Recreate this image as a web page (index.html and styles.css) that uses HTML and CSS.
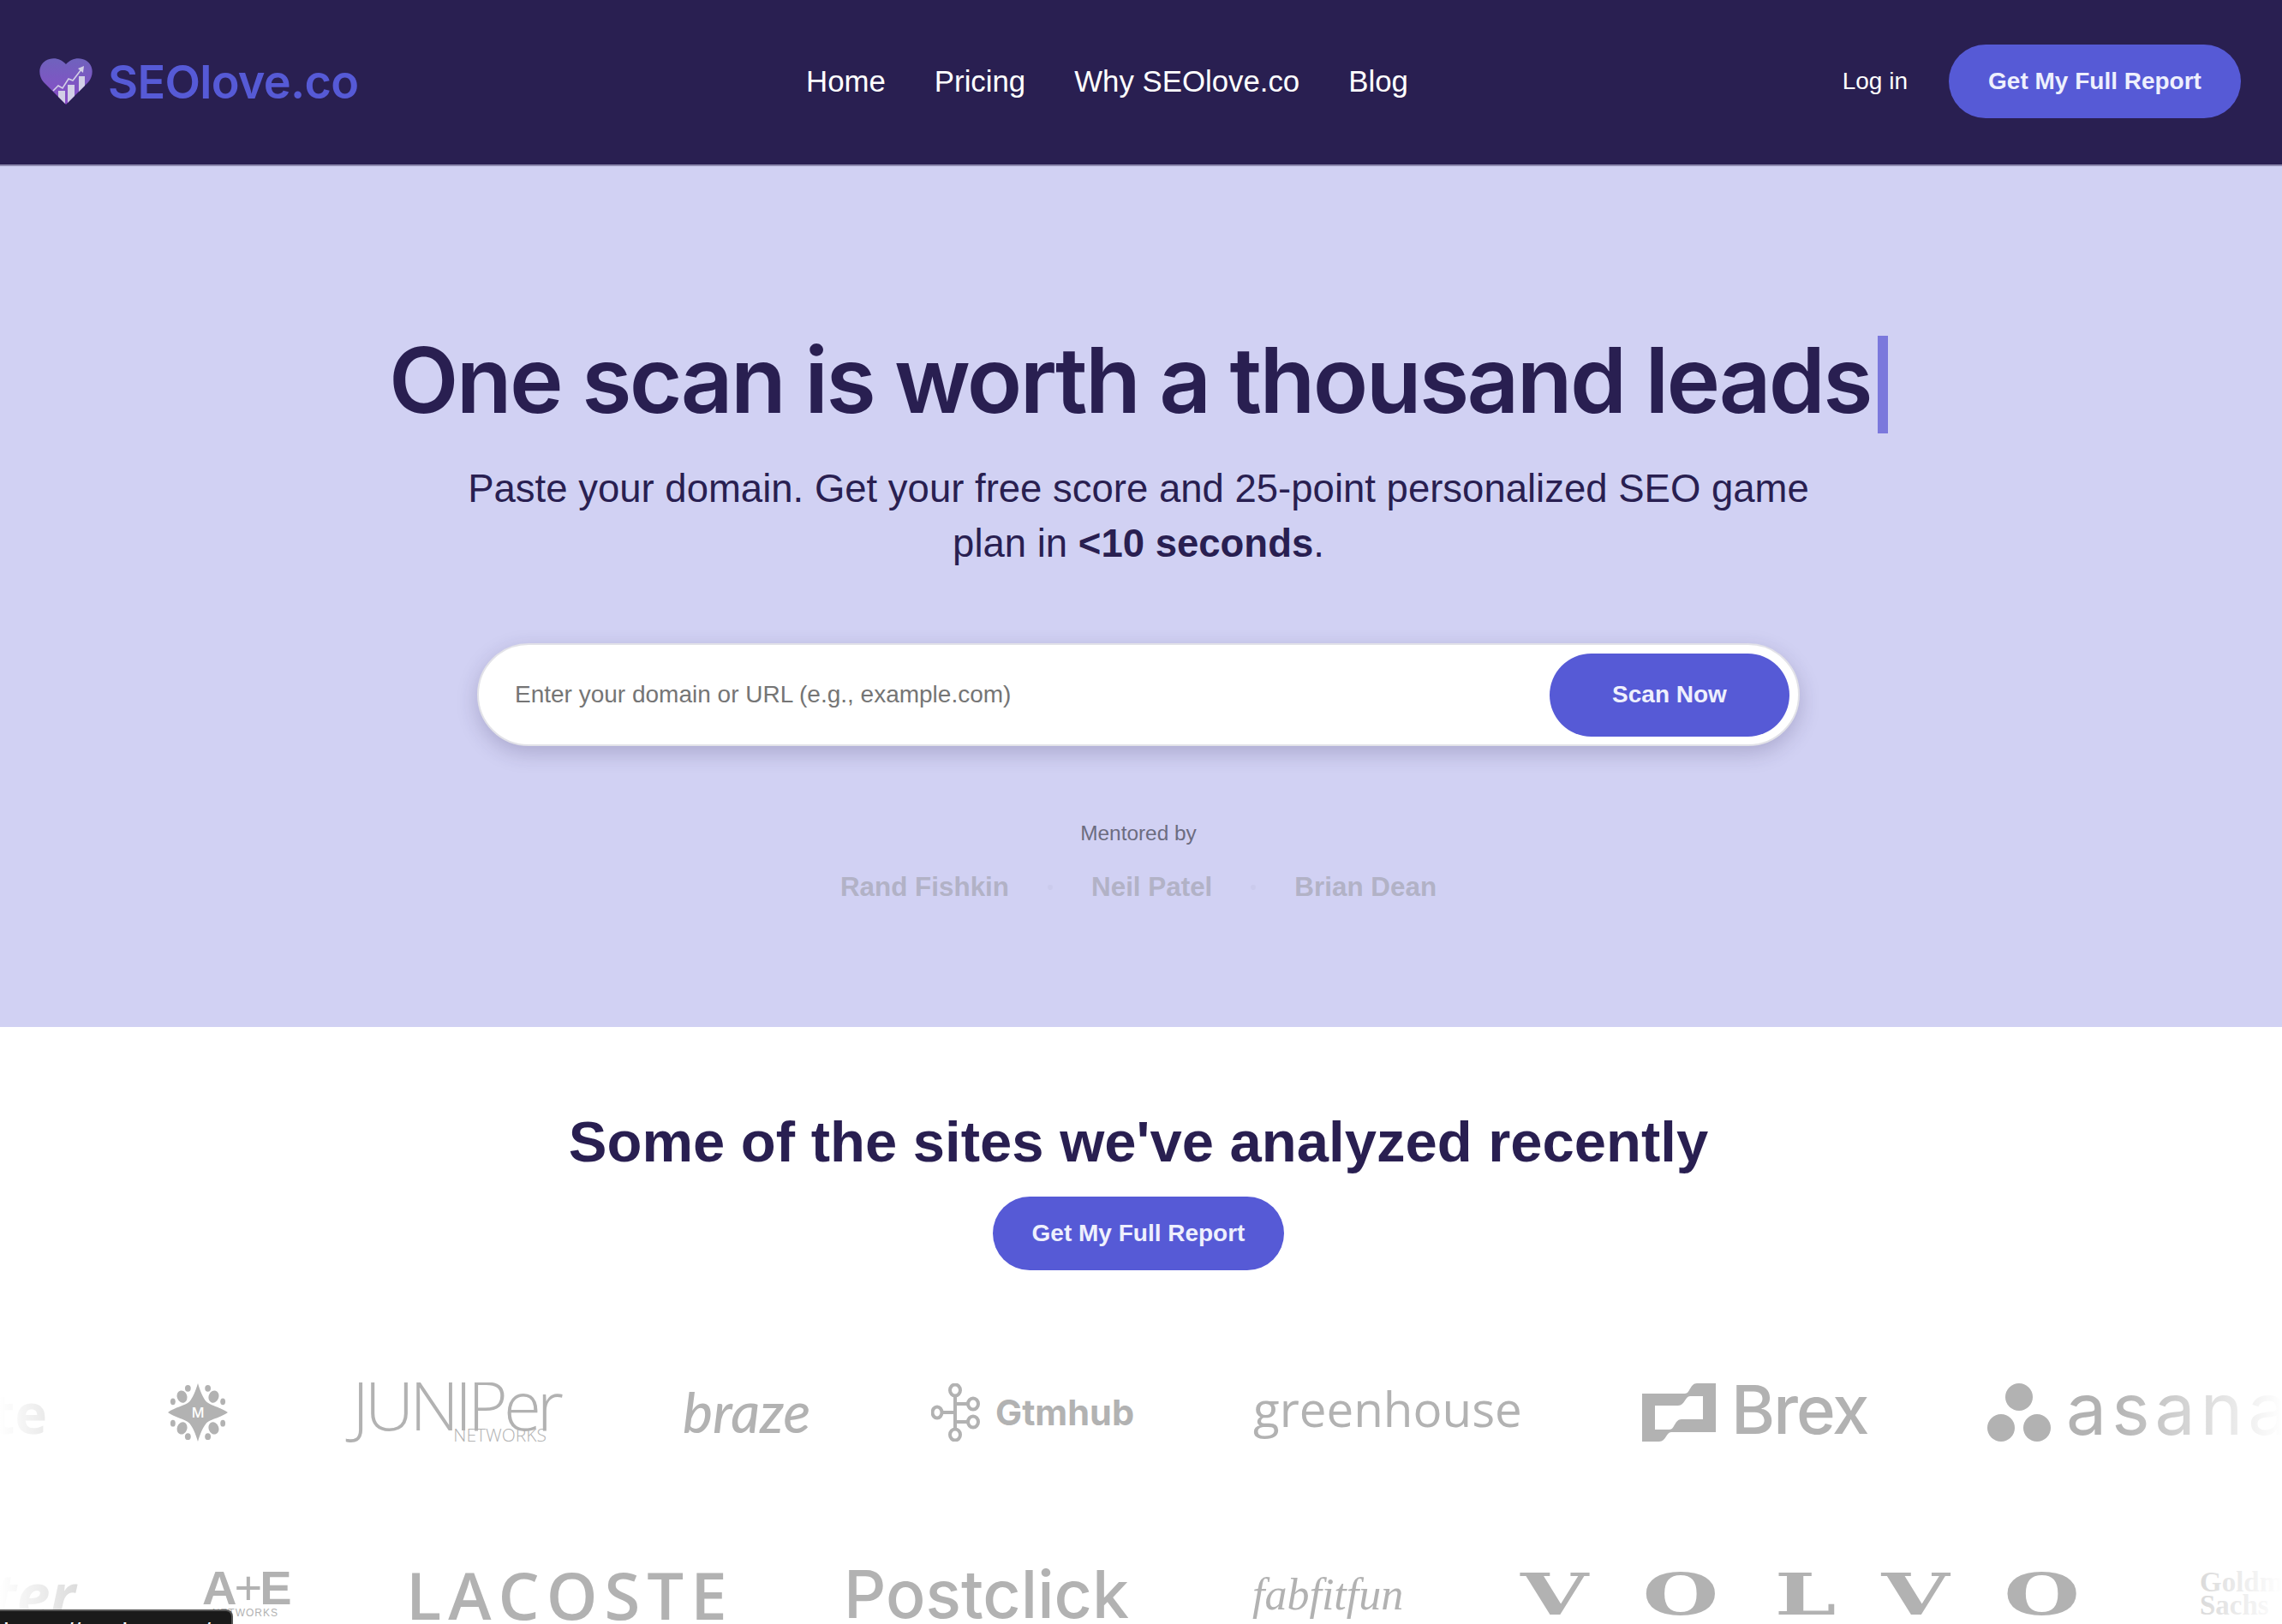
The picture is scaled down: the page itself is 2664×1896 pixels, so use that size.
FILE: index.html
```html
<!DOCTYPE html>
<html lang="en">
<head>
    <meta charset="UTF-8">
    <title>SEOlove.co</title>
    <meta name="viewport" content="width=device-width, initial-scale=1">
    <link rel="stylesheet" href="styles.css">
</head>
<body>
    <header class="topbar">
        <a class="brand" href="#">
            <svg class="brand-icon" viewBox="0 0 62 54">
                <defs>
                    <linearGradient id="heartFill" x1="0" y1="0" x2="0" y2="1">
                        <stop offset="0" stop-color="#6f62bd"/>
                        <stop offset="1" stop-color="#8a4cc8"/>
                    </linearGradient>
                </defs>
                <path d="M31 54 L5 28 C-2 20 -1 8 7 3 C15 -2 25 0 31 7 C37 0 47 -2 55 3 C63 8 64 20 57 28 Z" fill="url(#heartFill)"/>
                <path d="M22 38 H30 V53 L22 45 Z M33 31 H41 V44 L33 52 Z M46 21 H53 V32 L46 39 Z" fill="#d2d0e6"/>
                <path d="M16 38 L22 32 L27 35 L34 24 L39 26 L49 13" fill="none" stroke="#d2d0e6" stroke-width="1.6"/>
                <path d="M45 12 L52 9 L51 17 Z" fill="#d2d0e6"/>
            </svg>
            <span class="brand-name">SEOlove.co</span>
        </a>
        <nav class="main-nav">
            <a href="#">Home</a>
            <a href="#">Pricing</a>
            <a href="#">Why SEOlove.co</a>
            <a href="#">Blog</a>
        </nav>
        <div class="top-actions">
            <a class="login" href="#">Log in</a>
            <a class="btn" href="#">Get My Full Report</a>
        </div>
    </header>

    <section class="hero">
        <h1>One scan is worth a thousand leads<span class="caret"></span></h1>
        <p class="lead">Paste your domain. Get your free score and 25-point personalized SEO game<br>plan in <strong>&lt;10 seconds</strong>.</p>
        <form class="scan-form">
            <input type="text" placeholder="Enter your domain or URL (e.g., example.com)">
            <button type="button">Scan Now</button>
        </form>
        <p class="mentored">Mentored by</p>
        <div class="mentors">
            <span>Rand Fishkin</span>
            <i></i>
            <span>Neil Patel</span>
            <i></i>
            <span>Brian Dean</span>
        </div>
    </section>

    <section class="sites">
        <div class="sites-head">
            <h2>Some of the sites we've analyzed recently</h2>
            <a class="btn btn-center" href="#">Get My Full Report</a>
        </div>

        <div class="logo-strip">
            <div class="logo-row row-one">
                <span class="logo l-te">te</span>
                <svg class="l-m" viewBox="0 0 72 70">
                    <path d="M36 0 C33 10 30 17 26 22 C21 27 8 29 0 35 C8 41 21 43 26 48 C30 53 33 60 36 70 C39 60 42 53 46 48 C51 43 64 41 72 35 C64 29 51 27 46 22 C42 17 39 10 36 0 Z" fill="#b2b2b2"/>
                    <g fill="#b2b2b2">
                        <ellipse cx="24" cy="6" rx="3.5" ry="4"/>
                        <ellipse cx="48" cy="6" rx="3.5" ry="4"/>
                        <ellipse cx="24" cy="64" rx="3.5" ry="4"/>
                        <ellipse cx="48" cy="64" rx="3.5" ry="4"/>
                        <ellipse cx="17" cy="16" rx="6" ry="7.5" transform="rotate(-20 17 16)"/>
                        <ellipse cx="55" cy="16" rx="6" ry="7.5" transform="rotate(20 55 16)"/>
                        <ellipse cx="17" cy="54" rx="6" ry="7.5" transform="rotate(20 17 54)"/>
                        <ellipse cx="55" cy="54" rx="6" ry="7.5" transform="rotate(-20 55 54)"/>
                        <ellipse cx="6" cy="22" rx="3" ry="4"/>
                        <ellipse cx="66" cy="22" rx="3" ry="4"/>
                        <ellipse cx="6" cy="48" rx="3" ry="4"/>
                        <ellipse cx="66" cy="48" rx="3" ry="4"/>
                    </g>
                    <text x="36" y="41" text-anchor="middle" fill="#fff" font-size="17" font-weight="600" font-family="Open Sans">M</text>
                </svg>
                <span class="logo l-juniper"><span class="juniper-name">JUNIPer</span><small>NETWORKS</small></span>
                <span class="logo l-braze">braze</span>
                <span class="logo-group l-gtmhub">
                    <svg viewBox="0 0 57 68">
                        <g fill="none" stroke="#b2b2b2" stroke-width="4">
                            <ellipse cx="28" cy="8" rx="6" ry="6.5"/>
                            <ellipse cx="28" cy="60" rx="6" ry="6.5"/>
                            <ellipse cx="7" cy="34" rx="5.5" ry="6.5"/>
                            <ellipse cx="49" cy="24" rx="6" ry="6.5"/>
                            <ellipse cx="49" cy="45" rx="6" ry="6.5"/>
                            <path d="M28 14 V54 M12 34 H28 M28 24 H43 M28 45 H43"/>
                        </g>
                    </svg>
                    <span class="logo">Gtmhub</span>
                </span>
                <span class="logo l-greenhouse">greenhouse</span>
                <span class="logo-group l-brex">
                    <svg viewBox="0 0 86 68">
                        <path fill-rule="evenodd" d="M0 12 H50 C56 12 56 0 64 0 H86 V57 H34 C28 57 28 68 20 68 H0 Z M15 26 V54 H32 C38 54 38 42 46 42 H71 V15 H56 C50 15 50 26 42 26 Z" fill="#b2b2b2"/>
                    </svg>
                    <span class="logo">Brex</span>
                </span>
                <span class="logo-group l-asana">
                    <svg viewBox="0 0 74 68">
                        <circle cx="37" cy="16" r="16" fill="#b2b2b2"/>
                        <circle cx="16" cy="52" r="16" fill="#b2b2b2"/>
                        <circle cx="58" cy="52" r="16" fill="#b2b2b2"/>
                    </svg>
                    <span class="logo">asana</span>
                </span>
            </div>
            <div class="logo-row row-two">
                <span class="logo l-ter">ter</span>
                <span class="logo l-ae"><span><em>A</em>+<em>E</em></span><small>NETWORKS</small></span>
                <span class="logo l-lacoste">LACOSTE</span>
                <span class="logo l-postclick">Postclick</span>
                <span class="logo l-fab">fabfitfun</span>
                <span class="logo l-volvo">VOLVO</span>
                <span class="logo l-goldman">Goldman<br>Sachs</span>
            </div>
            <div class="fade fade-left"></div>
            <div class="fade fade-right"></div>
        </div>
    </section>

    <div class="status-bubble">https://seolove.co/</div>
</body>
</html>
```

FILE: styles.css
```css
:root {
    --navy: #291f51;
    --indigo: #565ad6;
    --lilac: #d1d1f3;
    --logo: #b2b2b2;
}
html, body {
    height: 100%;
    overflow: hidden;
}
body {
    background: #fff;
    color: var(--navy);
    font-family: 'Liberation Sans', Arial, sans-serif;
    margin: 0;
    padding: 0;
}
a {
    color: inherit;
    text-decoration: none;
}

/* top bar */
.topbar {
    position: relative;
    display: flex;
    align-items: center;
    justify-content: space-between;
    box-sizing: border-box;
    height: 194px;
    padding: 0 48px 2px 46px;
    background: var(--navy);
    border-bottom: 2px solid #8f8ab0;
}
.brand {
    display: flex;
    align-items: center;
    gap: 18px;
}
.brand-icon {
    width: 62px;
    height: 54px;
}
.brand-name {
    color: var(--indigo);
    font-family: Inter, sans-serif;
    font-size: 54px;
    font-weight: 600;
    letter-spacing: -0.7px;
}
.main-nav {
    position: absolute;
    left: 941px;
    display: flex;
    gap: 57px;
    color: #fff;
    font-size: 34.8px;
}
.top-actions {
    display: flex;
    align-items: center;
    gap: 48px;
    color: #fff;
}
.login {
    font-size: 28px;
}
.btn {
    display: inline-block;
    box-sizing: border-box;
    width: 341px;
    height: 86px;
    line-height: 86px;
    border-radius: 43px;
    background: var(--indigo);
    color: #eef0fd;
    font-size: 28px;
    font-weight: 700;
    text-align: center;
}

/* hero */
.hero {
    box-sizing: border-box;
    height: 1005px;
    padding: 188px 6px 0 0;
    background: var(--lilac);
    text-align: center;
}
.hero h1 {
    margin: 0;
    height: 124px;
    font-family: Inter, sans-serif;
    font-size: 106px;
    font-weight: 600;
    line-height: 124px;
    letter-spacing: -2.65px;
    white-space: nowrap;
}
.caret {
    display: inline-block;
    width: 12px;
    height: 114px;
    margin-left: 8px;
    background: #7b78dc;
    vertical-align: -24px;
}
.lead {
    margin: 33px 0 0;
    font-size: 45.5px;
    line-height: 64px;
}
.scan-form {
    display: flex;
    align-items: center;
    justify-content: space-between;
    box-sizing: border-box;
    width: 1544px;
    height: 120px;
    margin: 84px auto 0;
    padding: 0 10px 0 42px;
    background: #fff;
    border: 2px solid #e2e2e8;
    border-radius: 60px;
    box-shadow: 0 8px 24px rgba(41,31,81,0.22);
}
.scan-form input {
    flex: 1;
    padding: 0;
    border: 0;
    outline: 0;
    background: none;
    color: #757575;
    font-family: inherit;
    font-size: 28px;
}
.scan-form input::placeholder {
    color: #757575;
}
.scan-form button {
    width: 280px;
    height: 97px;
    border: 0;
    border-radius: 49px;
    background: var(--indigo);
    color: #eef0fd;
    font-family: inherit;
    font-size: 28px;
    font-weight: 700;
}
.mentored {
    margin: 88px 0 0;
    color: #6c6c80;
    font-size: 24.4px;
}
.mentors {
    display: flex;
    align-items: center;
    justify-content: center;
    gap: 45px;
    margin-top: 31px;
    color: #b2b2c6;
    font-size: 31.4px;
    font-weight: 700;
}
.mentors i {
    width: 6px;
    height: 6px;
    border-radius: 50%;
    background: #cbcbec;
}

/* logos */
.sites {
    padding-top: 92px;
}
.sites-head {
    padding-right: 6px;
    text-align: center;
}
.sites h2 {
    margin: 0;
    font-size: 67px;
    line-height: 84px;
    font-weight: 700;
}
.btn-center {
    display: block;
    width: 340px;
    margin: 22px auto 0;
}
.logo-strip {
    position: relative;
    height: 282px;
    margin-top: 131px;
    overflow: hidden;
}
.logo-row {
    display: flex;
    align-items: center;
    gap: 140px;
    height: 70px;
    white-space: nowrap;
}
.row-two {
    height: 60px;
    margin-top: 147px;
}
.logo {
    display: block;
    flex-shrink: 0;
    color: var(--logo);
}
.logo-group {
    display: flex;
    flex-shrink: 0;
    align-items: center;
    height: 68px;
}
.logo-group svg {
    height: 68px;
    flex-shrink: 0;
}
.l-te {
    width: 123px;
    margin-left: -68px;
    font: 700 64px 'Open Sans', sans-serif;
    text-align: right;
}
.l-m {
    flex-shrink: 0;
    width: 72px;
    height: 68px;
}
.l-juniper {
    display: flex;
    flex-direction: column;
    width: 250px;
    font: 300 80px/52px 'Open Sans', sans-serif;
    letter-spacing: -5px;
}
.juniper-name {
    margin-left: 4px;
}
.l-juniper small {
    align-self: flex-end;
    margin-right: 19px;
    font-size: 21px;
    line-height: 20px;
    letter-spacing: 0;
}
.l-braze {
    width: 150px;
    margin-bottom: 4px;
    font: italic 500 66px Lato, sans-serif;
}
.l-gtmhub {
    width: 236px;
    gap: 18px;
}
.l-gtmhub svg {
    width: 57px;
}
.l-gtmhub .logo {
    font: 700 41.5px Inter, sans-serif;
}
.l-greenhouse {
    width: 314px;
    margin-bottom: 10px;
    font: 400 56.5px 'Open Sans', sans-serif;
}
.l-brex {
    width: 263px;
    gap: 18px;
}
.l-brex svg {
    width: 86px;
}
.l-brex .logo {
    margin-bottom: 8px;
    font: 500 78px Inter, sans-serif;
    letter-spacing: -2px;
}
.l-asana {
    gap: 18px;
}
.l-asana svg {
    width: 74px;
}
.l-asana .logo {
    margin-bottom: 10px;
    font: 400 84px Inter, sans-serif;
    letter-spacing: 6px;
}
.l-ter {
    box-sizing: border-box;
    width: 140px;
    margin-left: -44px;
    padding-right: 8px;
    font: italic 700 70px 'Open Sans', sans-serif;
    text-align: right;
}
.l-ae {
    display: flex;
    flex-direction: column;
    width: 101px;
    margin-bottom: 2px;
    font: 400 56px/46px 'Liberation Sans', sans-serif;
    letter-spacing: -3px;
}
.l-ae em {
    font-style: normal;
    font-weight: 700;
}
.l-ae small {
    align-self: flex-end;
    margin-right: 12px;
    font-size: 12px;
    line-height: 12px;
    letter-spacing: 1px;
}
.l-lacoste {
    width: 368px;
    margin-left: -3px;
    margin-right: 3px;
    font: 600 76px 'Open Sans', sans-serif;
    letter-spacing: 8px;
}
.l-postclick {
    width: 337px;
    font: 500 77px Inter, sans-serif;
}
.l-fab {
    width: 173px;
    font: italic 400 52px 'Liberation Serif', serif;
}
.l-volvo {
    width: 653px;
    font: 700 68px 'DejaVu Serif', serif;
    letter-spacing: 43.5px;
    transform: scaleX(1.5);
    transform-origin: left center;
}
.l-goldman {
    font: 700 33px/27px 'Liberation Serif', serif;
}
.fade {
    position: absolute;
    top: 0;
    bottom: 0;
    width: 200px;
}
.fade-left {
    left: 0;
    background: linear-gradient(90deg, #fff 0%, rgba(255,255,255,0) 100%);
}
.fade-right {
    right: 0;
    background: linear-gradient(270deg, #fff 0%, rgba(255,255,255,0) 100%);
}

/* link preview at bottom of the window */
.status-bubble {
    position: fixed;
    left: 0;
    bottom: 0;
    width: 272px;
    height: 17px;
    padding-left: 4px;
    box-sizing: border-box;
    background: #1a1a1a;
    border-top: 2px solid #555;
    border-right: 2px solid #555;
    border-radius: 0 8px 0 0;
    color: #fff;
    font-size: 30px;
    line-height: 50px;
    overflow: hidden;
}
```
